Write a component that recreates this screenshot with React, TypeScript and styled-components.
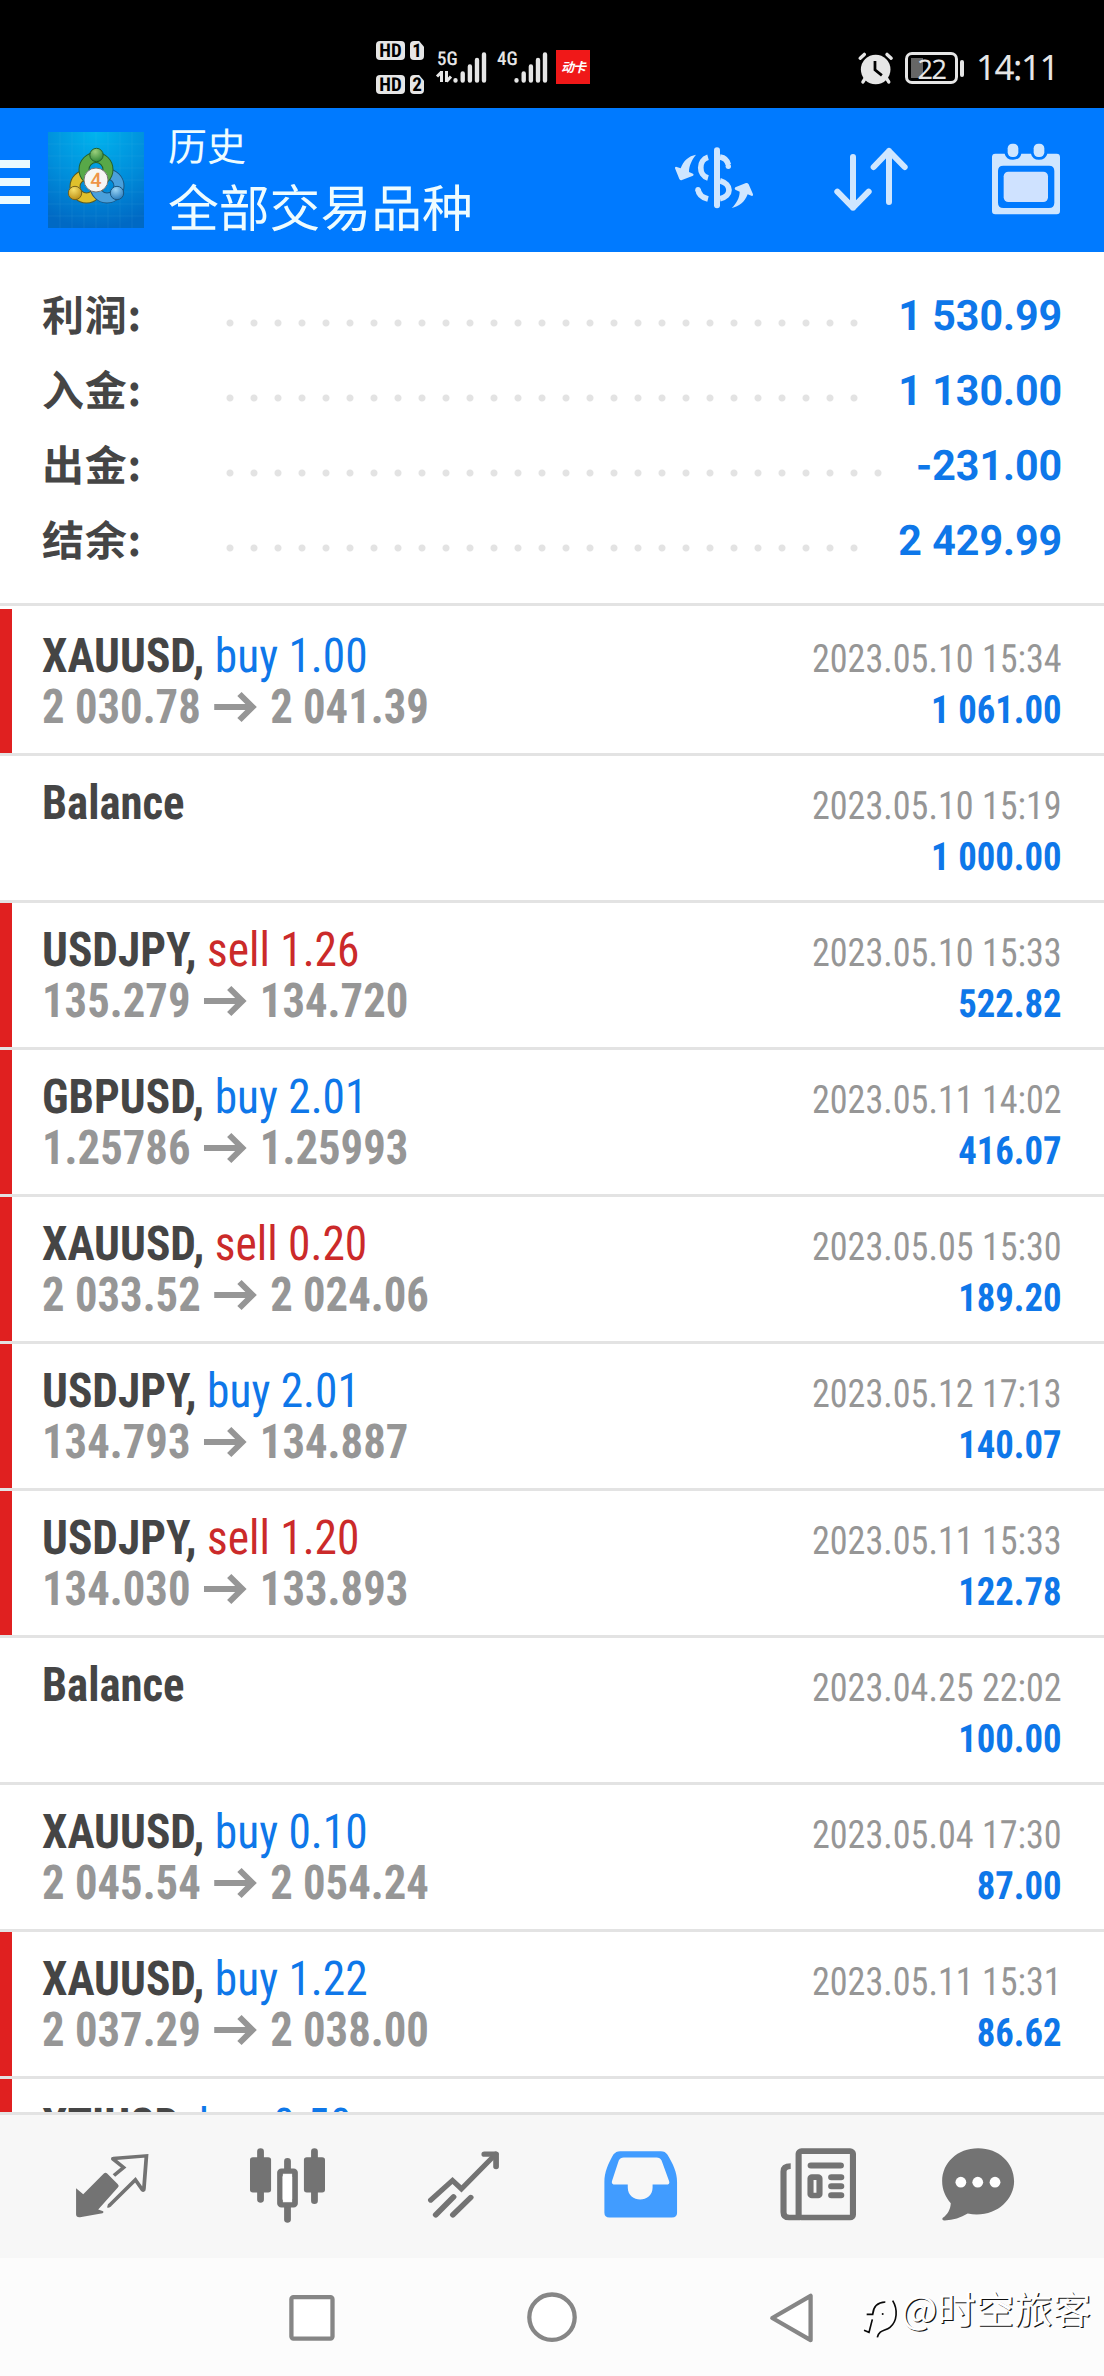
import React from 'react';
import styled, { createGlobalStyle } from 'styled-components';

const GlobalStyle = createGlobalStyle`
  * { box-sizing: border-box; }
  body { margin: 0; background: #fff; text-rendering: geometricPrecision; }
  svg { display: block; flex: none; overflow: visible; }
`;

const cjk = `Roboto, "Noto Sans CJK SC", sans-serif`;
const condensed = `"Roboto Condensed", Roboto, sans-serif`;

const Screen = styled.div`
  width: 1104px;
  height: 2376px;
  display: flex;
  flex-direction: column;
  overflow: hidden;
  background: #fff;
  font-family: ${cjk};
`;

/* ---------- status bar ---------- */

const StatusBar = styled.div`
  flex: none;
  height: 108px;
  padding: 41px 46px 0 376px;
  display: flex;
  align-items: flex-start;
  background: #000;
  color: #e6e6e6;
`;

const SimBadges = styled.div`
  display: grid;
  grid-template-columns: 29px 14px;
  gap: 15px 5px;
`;

const Badge = styled.span<{ $cut?: boolean }>`
  height: 19px;
  border-radius: 4px;
  background: #e6e6e6;
  color: #000;
  font: 700 19px/20px ${condensed};
  font-stretch: 75%;
  text-align: center;
  ${(p) => p.$cut && 'clip-path: polygon(0 0, 65% 0, 100% 30%, 100% 100%, 0 100%);'}
`;

const Network = styled.div<{ $gap: number }>`
  margin: 11px 0 0 ${(p) => p.$gap}px;
  display: flex;
  width: 50px;
`;

const NetworkLabel = styled.div<{ $w: number }>`
  width: ${(p) => p.$w}px;
  font: 500 19px/14px ${condensed};
  font-stretch: 75%;
`;

const DataArrows = styled.svg`
  margin-top: 5px;
`;

const Carrier = styled.div`
  width: 34px;
  height: 34px;
  margin: 9px 0 0 9px;
  background: #f01818;
  color: #fff;
  font: italic 700 13px/33px "Noto Sans CJK SC", sans-serif;
  text-align: center;
  white-space: nowrap;
  letter-spacing: -1px;
`;

const StatusRight = styled.div`
  margin: 10px 0 0 auto;
  display: flex;
  align-items: center;
`;

const Battery = styled.div`
  width: 53px;
  height: 32px;
  margin-left: 12px;
  border: 3px solid #e6e6e6;
  border-radius: 7px;
  padding: 3px;
  background: linear-gradient(#666, #666) 3px 3px / 12px 20px no-repeat;
  font: 400 27px/21px "Noto Sans", sans-serif;
  letter-spacing: -1.5px;
  text-align: center;
`;

const BatteryTip = styled.div`
  width: 4px;
  height: 17px;
  margin-left: 2px;
  border-radius: 2px;
  background: #e6e6e6;
`;

const Time = styled.div`
  width: 82px;
  margin-left: 12px;
  font: 400 35px/34px "Noto Sans", sans-serif;
  letter-spacing: -1.5px;
  white-space: nowrap;
`;

/* ---------- header ---------- */

const Header = styled.header`
  flex: none;
  height: 144px;
  display: flex;
  align-items: center;
  background: #007aff;
  color: #eefcff;
`;

const Burger = styled.div`
  width: 30px;
  margin-top: 4px;
  display: grid;
  gap: 10px;
  i { height: 8px; background: #eafaff; }
`;

const Logo = styled.svg`
  margin-left: 18px;
`;

const Titles = styled.div`
  margin-left: 24px;
  padding-bottom: 4px;
  flex: 1;
  font-family: "Noto Sans CJK SC", sans-serif;
`;

const Title = styled.div`
  font-size: 39px;
  line-height: 54px;
`;

const Subtitle = styled.div`
  font-size: 50.8px;
  line-height: 66px;
`;

const Actions = styled.div`
  display: flex;
  gap: 75.500px;
  margin-right: 38px;
`;

/* ---------- summary ---------- */

const Summary = styled.section`
  flex: none;
  height: 354px;
  padding: 26px 42px 0;
  border-bottom: 3px solid #e3e3e3;
`;

const SummaryRow = styled.div`
  height: 75px;
  display: flex;
  align-items: center;
`;

const SummaryLabel = styled.span`
  width: 176px;
  padding-bottom: 4px;
  color: #454545;
  font: 700 42px/70px "Noto Sans CJK SC", sans-serif;
  letter-spacing: 0.8px;
`;

const Dots = styled.span<{ $count: number }>`
  width: ${(p) => p.$count * 24}px;
  height: 8px;
  margin-top: 15px;
  background: radial-gradient(circle at 12px 4px, #e3e3e3 3px, transparent 4px) 0 0 / 24px 8px repeat-x;
`;

const SummaryValue = styled.span`
  margin-left: auto;
  padding-top: 1px;
  color: #0e77e9;
  font: 700 42px/75px Roboto, sans-serif;
  transform: scaleX(0.98);
  transform-origin: right;
`;

/* ---------- deals ---------- */

const Deals = styled.section`
  flex: 1;
  min-height: 0;
  overflow: hidden;
  padding-top: 3px;
`;

const Deal = styled.article<{ $marked: boolean }>`
  height: 147px;
  display: flex;
  justify-content: space-between;
  padding: 21px 42px 0;
  border-bottom: 3px solid #e3e3e3;
  background: linear-gradient(${(p) => (p.$marked ? '#e02020, #e02020' : '#fff, #fff')}) 0 0 / 12px 144px no-repeat;
  font-family: ${condensed};
  font-stretch: 75%;
  white-space: nowrap;
`;

const DealInfo = styled.div`
  font-size: 48px;
  line-height: 51px;
`;

const Symbol = styled.div<{ $squeeze: number }>`
  color: #454545;
  font-weight: 700;
  transform: scaleX(${(p) => p.$squeeze});
  transform-origin: left;
`;

const Side = styled.span<{ $side: string }>`
  font-weight: 400;
  color: ${(p) => (p.$side === 'buy' ? '#0e77e9' : '#cb2a2a')};
`;

const Prices = styled.div`
  display: flex;
  align-items: center;
  gap: 14.500px;
  color: #969696;
  font-weight: 700;
  transform: scaleX(0.931);
  transform-origin: left;
`;

const DealResult = styled.div`
  padding-top: 4px;
  text-align: right;
  font-size: 39px;
  line-height: 51px;
`;

const DateText = styled.div`
  color: #969696;
  transform: scaleX(0.926);
  transform-origin: right;
`;

const Profit = styled.div`
  color: #0e77e9;
  font-weight: 700;
  transform: scaleX(0.942);
  transform-origin: right;
`;

/* ---------- bottom bars ---------- */

const TabBar = styled.nav`
  flex: none;
  height: 146px;
  padding: 0 24px;
  display: flex;
  border-top: 3px solid #e3e3e3;
  background: #f7f7f7;
`;

const Tab = styled.div`
  flex: 1;
  display: flex;
  align-items: center;
  justify-content: center;
`;

const SystemNav = styled.div`
  position: relative;
  flex: none;
  height: 118px;
  padding-top: 29px;
  display: flex;
  justify-content: center;
  gap: 180px;
  background: #fcfcfc;
`;

const Watermark = styled.div`
  position: absolute;
  left: 860px;
  top: 22px;
  display: flex;
  align-items: flex-start;
  gap: 1px;
  color: #fff;
  font: 400 38.4px/56px "Noto Sans CJK SC", sans-serif;
  text-shadow: 1.2px 1.2px 0 #111;
  white-space: nowrap;
`;

const Signal = () => (
  <svg width="34" height="31" viewBox="0 0 34 31" fill="none" stroke="#e6e6e6" strokeWidth="4.4" strokeLinecap="round">
    <path d="M2.5 28.2v.3M9.7 21.5v7M16.9 14.5v14M24 8v20.5M31 2.5v26" />
  </svg>
);

const AlarmIcon = () => (
  <svg width="35" height="32" viewBox="55 64 99 93">
    <circle cx="105" cy="115" r="43" fill="#e6e6e6" />
    <g stroke="#e6e6e6" strokeWidth="10" strokeLinecap="round">
      <path d="M60 82l12-11M150 82l-12-11M75 140l-7 11M136 140l7 11" />
    </g>
    <path d="M103 90v26l20 16" stroke="#000" strokeWidth="8" fill="none" />
  </svg>
);

const AppLogo = () => (
  <Logo width="96" height="96" viewBox="0 0 96 96">
    <defs>
      <radialGradient id="bg" cx=".5" cy="0" r="1">
        <stop offset="0" stopColor="#00b4ee" />
        <stop offset=".55" stopColor="#008edb" />
        <stop offset="1" stopColor="#0069c4" />
      </radialGradient>
      <radialGradient id="green" cx=".4" cy=".25" r=".8">
        <stop offset="0" stopColor="#9bd07c" />
        <stop offset="1" stopColor="#2c8434" />
      </radialGradient>
      <radialGradient id="gold" cx=".4" cy=".25" r=".8">
        <stop offset="0" stopColor="#f7e06a" />
        <stop offset="1" stopColor="#b98c12" />
      </radialGradient>
      <radialGradient id="blue" cx=".4" cy=".25" r=".8">
        <stop offset="0" stopColor="#9ad4f5" />
        <stop offset="1" stopColor="#2378bb" />
      </radialGradient>
    </defs>
    <path fill="url(#bg)" d="M0 0h96v96H0z" />
    <path d="M12 0v96M24 0v96M36 0v96M48 0v96M60 0v96M72 0v96M84 0v96M0 12h96M0 24h96M0 36h96M0 48h96M0 60h96M0 72h96M0 84h96" stroke="#5fd0f5" strokeOpacity=".1" />
    <g strokeWidth="11" fill="none">
      <circle cx="38.500" cy="54.500" r="11.500" stroke="#5b5a20" />
      <circle cx="38.500" cy="54.500" r="11.500" stroke="#dfc02c" strokeWidth="9" />
      <circle cx="59" cy="54" r="12" stroke="#1a5580" />
      <circle cx="59" cy="54" r="12" stroke="#4aa0dc" strokeWidth="9" />
      <circle cx="48" cy="37.500" r="12" stroke="#24602c" />
      <circle cx="48" cy="37.500" r="12" stroke="#58a848" strokeWidth="9" />
    </g>
    <circle cx="48.5" cy="23" r="6.7" fill="url(#green)" stroke="#24602c" />
    <circle cx="27" cy="61" r="6.7" fill="url(#gold)" stroke="#75601a" />
    <circle cx="69" cy="61" r="6.7" fill="url(#blue)" stroke="#1a5580" />
    <circle cx="48" cy="48" r="12" fill="#f6f6f4" stroke="#777" />
    <text x="48" y="55" textAnchor="middle" fontFamily="Roboto, sans-serif" fontSize="20" fontWeight="500" fill="#ee9548">4</text>
  </Logo>
);

const ExchangeIcon = () => (
  <svg width="80" height="80" viewBox="105 120 240 240" fill="#cfe6ff">
    <path d="M231 151v165" stroke="#cfe6ff" strokeWidth="18" strokeLinecap="round" />
    <path
      d="M204 172c-29 8-29 54 0 62M240 171c13 2 22 10 25 23M174 268c2 17 14 25 30 29M240 242c36 10 36 47 0 54"
      fill="none" stroke="#cfe6ff" strokeWidth="17"
    />
    <circle cx="265" cy="199" r="8" />
    <circle cx="174" cy="269" r="8" />
    <path d="M168 164c-22 4-38 18-46 41l-14-5q-4 0-3 5l13 32q3 5 8 3l33-13q4-3 0-6l-12-5c0-18 8-36 21-52z" />
    <path d="M275 324c22-4 39-17 48-41l13 5q4 0 3-5l-13-30q-3-5-8-4l-32 13q-4 4 0 7l13 6c0 18-10 36-24 49z" />
  </svg>
);

const SortIcon = () => (
  <svg width="80" height="80" viewBox="570 120 240 240" fill="none" stroke="#cfe6ff" strokeWidth="18" strokeLinecap="round" strokeLinejoin="round">
    <path d="M636 171v152M589 275l47 48 47-48M744 306V153M698 201l46-48 47 48" />
  </svg>
);

const CalendarIcon = () => (
  <svg width="80" height="80" viewBox="1038 120 240 240">
    <path
      fill="#cfe6ff" fillRule="evenodd"
      d="M1066 161h28q4 18 25 18t25-18h29q4 18 24 18t25-18h28q10 0 10 10v162q0 10-10 10h-184q-10 0-10-10V171q0-10 10-10zM1090 197q-16 0-16 16v95q0 16 16 16h137q16 0 16-16v-95q0-16-16-16z"
    />
    <rect x="1091" y="215" width="133" height="91" rx="14" fill="#cfe2ff" />
    <rect x="1103" y="131" width="32" height="40" rx="14" fill="#cfe6ff" />
    <rect x="1181" y="131" width="32" height="40" rx="14" fill="#cfe6ff" />
  </svg>
);

const PriceArrow = () => (
  <svg width="45.500" height="30" viewBox="0 0 42 30" preserveAspectRatio="none" fill="none" stroke="#969696" strokeWidth="6">
    <path d="M0 15h38M25 2l13 13-13 13" />
  </svg>
);

const g = '#737373';

const TabIcon = styled.svg.attrs({ width: 90, height: 90, preserveAspectRatio: 'none' })``;

const QuotesIcon = () => (
  <TabIcon viewBox="187.6 244.5 252 270" fill={g}>
    <path d="M213 383l20 18 57-61q5-6 10-1l30 32q5 5 0 10l-55 66 14 5q2 4-2 6l-63 12q-11 1-11-9z" />
    <path d="M319 345l27-24-29-25q-2-2 0-2l93-8-7 98q0 8-5 3l-19-29-71 75q-3 4-7 3" fill="none" stroke={g} strokeWidth="10.500" />
  </TabIcon>
);

const ChartIcon = () => (
  <TabIcon viewBox="680.4 244.5 252 270" fill={g}>
    <path d="M729.500 273v144M880.500 273v148M805 302v30M805 430v47" stroke={g} strokeWidth="19" strokeLinecap="round" />
    <rect x="700" y="290" width="59" height="106" rx="8" />
    <rect x="851" y="290" width="59" height="106" rx="8" />
    <rect x="784" y="332" width="42" height="101" rx="4" fill="#f7f7f7" stroke={g} strokeWidth="16" />
    <rect x="791" y="341" width="27" height="82" rx="9" fill="#fff" />
  </TabIcon>
);

const TradeIcon = () => (
  <TabIcon viewBox="1173.2 244.5 252 270" fill="none" stroke={g} strokeWidth="15" strokeLinecap="round" strokeLinejoin="round">
    <path d="M1206 419l61-59 25 25 96-104" strokeLinejoin="miter" />
    <path d="M1356 281h33v37M1220 463l50-54M1268 463l50-52" strokeWidth="16" />
  </TabIcon>
);

const HistoryIcon = () => (
  <TabIcon viewBox="152.9 244.5 250.2 270" fill="#419cff">
    <path
      fillRule="evenodd"
      d="M223 272h113q12 0 18 10c16 28 27 54 27 82v93q0 14-14 14H193q-14 0-14-14v-93c0-28 10-54 25-82q7-10 19-10zM233 291q-10 0-14 9l-19 62q-2 10 9 10h35v9c0 48 69 48 69 0v-9h38q11 0 8-10l-21-62q-4-9-14-9z"
    />
  </TabIcon>
);

const NewsIcon = () => (
  <TabIcon viewBox="642.2 244.5 250.2 270" fill="none" stroke={g} strokeWidth="17">
    <rect x="719" y="272" width="151" height="199" rx="8" />
    <path d="M697 317q-20 0-20 16v122q0 16 16 16h30" />
    <path d="M753 315h83M810 350h27M810 377h27M810 404h27" strokeLinecap="round" strokeWidth="18" />
    <rect x="752" y="350" width="25" height="55" rx="4" />
  </TabIcon>
);

const ChatIcon = () => (
  <TabIcon viewBox="1131.5 244.5 250.2 270" fill={g}>
    <path d="M1218 263c58 0 100 44 100 99 0 60-58 113-129 97-19 13-40 20-64 21q-10-1-5-8c14-12 21-25 22-44-14-18-24-40-24-66 0-55 42-99 100-99z" />
    <g fill="#fff">
      <ellipse cx="1170" cy="365" rx="15" ry="16" />
      <ellipse cx="1217" cy="365" rx="15" ry="16" />
      <ellipse cx="1265" cy="365" rx="15" ry="16" />
    </g>
  </TabIcon>
);

const LeafMark = () => (
  <svg width="40" height="60" viewBox="0 66 120 180">
    <g fill="none" stroke="#fff" strokeWidth="9" transform="translate(-4 62)">
      <path d="M22 103h18c2-24 14-36 38-36M98 64c16 26 14 60-6 78-14 12-36 6-42 28M14 152l14 4 8-38" />
    </g>
    <g fill="none" stroke="#0a0a0a" strokeWidth="5" transform="translate(0 66)">
      <path d="M20 103h18c2-24 14-36 38-37M98 62c16 26 14 62-8 80-14 12-32 6-38 30M12 151l15 6 10-39" />
      <circle cx="68" cy="102" r="3" fill="#0a0a0a" stroke="none" />
    </g>
  </svg>
);

const summary = [
  { label: '利润:', value: '1 530.99', dots: 27 },
  { label: '入金:', value: '1 130.00', dots: 27 },
  { label: '出金:', value: '-231.00', dots: 28 },
  { label: '结余:', value: '2 429.99', dots: 27 },
];

type DealData = {
  symbol: string;
  side?: string;
  volume?: string;
  open?: string;
  close?: string;
  date: string;
  profit: string;
  marked: boolean;
};

const deals: DealData[] = [
  { symbol: 'XAUUSD', side: 'buy', volume: '1.00', open: '2 030.78', close: '2 041.39', date: '2023.05.10 15:34', profit: '1 061.00', marked: true },
  { symbol: 'Balance', date: '2023.05.10 15:19', profit: '1 000.00', marked: false },
  { symbol: 'USDJPY', side: 'sell', volume: '1.26', open: '135.279', close: '134.720', date: '2023.05.10 15:33', profit: '522.82', marked: true },
  { symbol: 'GBPUSD', side: 'buy', volume: '2.01', open: '1.25786', close: '1.25993', date: '2023.05.11 14:02', profit: '416.07', marked: true },
  { symbol: 'XAUUSD', side: 'sell', volume: '0.20', open: '2 033.52', close: '2 024.06', date: '2023.05.05 15:30', profit: '189.20', marked: true },
  { symbol: 'USDJPY', side: 'buy', volume: '2.01', open: '134.793', close: '134.887', date: '2023.05.12 17:13', profit: '140.07', marked: true },
  { symbol: 'USDJPY', side: 'sell', volume: '1.20', open: '134.030', close: '133.893', date: '2023.05.11 15:33', profit: '122.78', marked: true },
  { symbol: 'Balance', date: '2023.04.25 22:02', profit: '100.00', marked: false },
  { symbol: 'XAUUSD', side: 'buy', volume: '0.10', open: '2 045.54', close: '2 054.24', date: '2023.05.04 17:30', profit: '87.00', marked: false },
  { symbol: 'XAUUSD', side: 'buy', volume: '1.22', open: '2 037.29', close: '2 038.00', date: '2023.05.11 15:31', profit: '86.62', marked: true },
  { symbol: 'XTIUSD', side: 'buy', volume: '0.50', date: '', profit: '', marked: true },
];

const tabs = [QuotesIcon, ChartIcon, TradeIcon, HistoryIcon, NewsIcon, ChatIcon];

export default function App() {
  return (
    <Screen>
      <GlobalStyle />
      <StatusBar>
        <SimBadges>
          <Badge>HD</Badge>
          <Badge $cut>1</Badge>
          <Badge>HD</Badge>
          <Badge $cut>2</Badge>
        </SimBadges>
        <Network $gap={13}>
          <NetworkLabel $w={16}>
            5G
            <DataArrows width="15" height="12" viewBox="0 0 15 12" fill="none" stroke="#e6e6e6" strokeWidth="3">
              <path d="M0 5.500l4-4M4.500 0v11M9.500 0v11M9.500 10.500l4.500-5" />
            </DataArrows>
          </NetworkLabel>
          <Signal />
        </Network>
        <Network $gap={10}>
          <NetworkLabel $w={17}>4G</NetworkLabel>
          <Signal />
        </Network>
        <Carrier>动卡</Carrier>
        <StatusRight>
          <AlarmIcon />
          <Battery>22</Battery>
          <BatteryTip />
          <Time>14:11</Time>
        </StatusRight>
      </StatusBar>

      <Header>
        <Burger><i /><i /><i /></Burger>
        <AppLogo />
        <Titles>
          <Title>历史</Title>
          <Subtitle>全部交易品种</Subtitle>
        </Titles>
        <Actions>
          <ExchangeIcon />
          <SortIcon />
          <CalendarIcon />
        </Actions>
      </Header>

      <Summary>
        {summary.map((s) => (
          <SummaryRow key={s.label}>
            <SummaryLabel>{s.label}</SummaryLabel>
            <Dots $count={s.dots} />
            <SummaryValue>{s.value}</SummaryValue>
          </SummaryRow>
        ))}
      </Summary>

      <Deals>
        {deals.map((d, i) => (
          <Deal key={i} $marked={d.marked}>
            <DealInfo>
              <Symbol $squeeze={d.side ? 0.945 : 0.932}>
                {d.symbol}
                {d.side && <>, <Side $side={d.side}>{d.side} {d.volume}</Side></>}
              </Symbol>
              {d.open && (
                <Prices>
                  <span>{d.open}</span>
                  <PriceArrow />
                  <span>{d.close}</span>
                </Prices>
              )}
            </DealInfo>
            <DealResult>
              <DateText>{d.date}</DateText>
              <Profit>{d.profit}</Profit>
            </DealResult>
          </Deal>
        ))}
      </Deals>

      <TabBar>
        {tabs.map((Icon, i) => (
          <Tab key={i}><Icon /></Tab>
        ))}
      </TabBar>

      <SystemNav>
        <svg width="60" height="60" viewBox="0 0 60 60" fill="#fff" stroke="#868686" strokeWidth="4.300">
          <rect x="9.400" y="10.200" width="41.100" height="41.400" rx="2" />
        </svg>
        <svg width="60" height="60" viewBox="0 0 60 60" fill="#fff" stroke="#868686" strokeWidth="4.300">
          <circle cx="30" cy="30.200" r="22.700" />
        </svg>
        <svg width="60" height="60" viewBox="0 0 60 60" fill="#fff" stroke="#868686" strokeWidth="4.300" strokeLinejoin="round">
          <path d="M10.300 31L48.600 8.800v44.400z" />
        </svg>
        <Watermark>
          <LeafMark />
          @时空旅客
        </Watermark>
      </SystemNav>
    </Screen>
  );
}
